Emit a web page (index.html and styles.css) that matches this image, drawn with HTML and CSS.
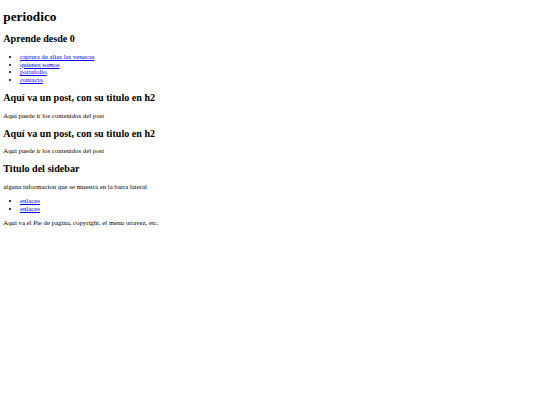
FILE: index.html
```html
<!DOCTYPE html>
<html lang="es">
<head>
<meta charset="utf-8">
<title>periodico</title>
<link rel="stylesheet" href="styles.css">
</head>
<body class="site">
<header class="header">
  <h1 class="title">periodico</h1>
  <h2 class="heading">Aprende desde 0</h2>
  <nav>
    <ul class="list">
      <li><a class="link" href="#">captura de alias las venecas</a></li>
      <li><a class="link" href="#">quienes somos</a></li>
      <li><a class="link" href="#">portafolio</a></li>
      <li><a class="link" href="#">contacto</a></li>
    </ul>
  </nav>
</header>
<main class="content">
  <article>
    <h2 class="heading">Aquí va un post, con su titulo en h2</h2>
    <p class="text">Aqui puede ir los contenidos del post</p>
  </article>
  <article>
    <h2 class="heading">Aquí va un post, con su titulo en h2</h2>
    <p class="text">Aqui puede ir los contenidos del post</p>
  </article>
</main>
<aside class="sidebar">
  <h2 class="heading">Titulo del sidebar</h2>
  <p class="text">alguna informacion que se muestra en la barra lateral</p>
  <ul class="list">
    <li><a class="link" href="#">enlaces</a></li>
    <li><a class="link" href="#">enlaces</a></li>
  </ul>
</aside>
<footer class="footer">
  <p class="text">Aqui va el Pie de pagina, copyright, el menu otravez, etc.</p>
</footer>
</body>
</html>
```

FILE: styles.css
```css
html {
  background: #ffffff;
}

.site {
  margin: 3.32px;
  font-family: "Liberation Serif", "Times New Roman", serif;
  font-size: 6.78px;
  line-height: 7.64px;
  color: #000000;
}

.title {
  font-size: 13.29px;
  line-height: 15.29px;
  font-weight: bold;
  margin: 5.9px 0 8.91px;
}

.heading {
  font-size: 10.1px;
  line-height: 11.47px;
  font-weight: bold;
  margin: 8.27px 0;
}

.text {
  margin: 6.65px 0;
}

.list {
  margin: 6.65px 0;
  padding-left: 16.62px;
  list-style: disc;
}

.link {
  color: #0000ee;
  text-decoration: underline;
}
```
